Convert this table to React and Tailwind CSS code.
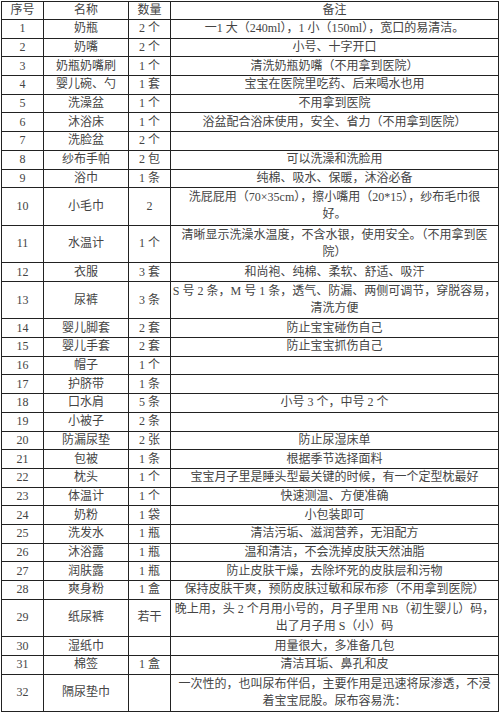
import React from 'react';

// 婴儿用品清单
const rows = [
  ['1', '奶瓶', '2 个', ['一1 大（240ml），1 小（150ml），宽口的易清洁。']],
  ['2', '奶嘴', '2 个', ['小号、十字开口']],
  ['3', '奶瓶奶嘴刷', '1 个', ['清洗奶瓶奶嘴（不用拿到医院）']],
  ['4', '婴儿碗、勺', '1 套', ['宝宝在医院里吃药、后来喝水也用']],
  ['5', '洗澡盆', '1 个', ['不用拿到医院']],
  ['6', '沐浴床', '1 个', ['浴盆配合浴床使用，安全、省力（不用拿到医院）']],
  ['7', '洗脸盆', '2 个', []],
  ['8', '纱布手帕', '2 包', ['可以洗澡和洗脸用']],
  ['9', '浴巾', '1 条', ['纯棉、吸水、保暖，沐浴必备']],
  ['10', '小毛巾', '2', ['洗屁屁用（70×35cm），擦小嘴用（20*15），纱布毛巾很', '好。']],
  ['11', '水温计', '1 个', ['清晰显示洗澡水温度，不含水银，使用安全。（不用拿到医', '院）']],
  ['12', '衣服', '3 套', ['和尚袍、纯棉、柔软、舒适、吸汗']],
  ['13', '尿裤', '3 条', ['S 号 2 条，M 号 1 条，透气、防漏、两侧可调节，穿脱容易，', '清洗方便']],
  ['14', '婴儿脚套', '2 套', ['防止宝宝碰伤自己']],
  ['15', '婴儿手套', '2 套', ['防止宝宝抓伤自己']],
  ['16', '帽子', '1 个', []],
  ['17', '护脐带', '1 条', []],
  ['18', '口水肩', '5 条', ['小号 3 个，中号 2 个']],
  ['19', '小被子', '2 条', []],
  ['20', '防漏尿垫', '2 张', ['防止尿湿床单']],
  ['21', '包被', '1 条', ['根据季节选择面料']],
  ['22', '枕头', '1 个', ['宝宝月子里是睡头型最关键的时候，有一个定型枕最好']],
  ['23', '体温计', '1 个', ['快速测温、方便准确']],
  ['24', '奶粉', '1 袋', ['小包装即可']],
  ['25', '洗发水', '1 瓶', ['清洁污垢、滋润营养，无泪配方']],
  ['26', '沐浴露', '1 瓶', ['温和清洁，不会洗掉皮肤天然油脂']],
  ['27', '润肤露', '1 瓶', ['防止皮肤干燥，去除坏死的皮肤层和污物']],
  ['28', '爽身粉', '1 盒', ['保持皮肤干爽，预防皮肤过敏和尿布疹（不用拿到医院）']],
  ['29', '纸尿裤', '若干', ['晚上用，头 2 个月用小号的，月子里用 NB（初生婴儿）码，', '出了月子用 S（小）码']],
  ['30', '湿纸巾', '', ['用量很大，多准备几包']],
  ['31', '棉签', '1 盒', ['清洁耳垢、鼻孔和皮']],
  ['32', '隔尿垫巾', '', ['一次性的，也叫尿布伴侣，主要作用是迅速将尿渗透，不浸', '着宝宝屁股。尿布容易洗：']],
];

const cell = 'border border-[#222] p-0 text-center align-middle';

export default function App() {
  return (
    <div className="w-[500px] h-[714px] bg-white overflow-hidden pt-[1px] pl-[1px]">
      <table
        className="table-fixed border-collapse w-[497px] text-[12px] leading-[17px] text-[#444]"
        style={{ fontFamily: '"Liberation Serif", "Noto Sans CJK SC", serif' }}
      >
        <colgroup>
          <col className="w-[42px]" />
          <col className="w-[85px]" />
          <col className="w-[42px]" />
          <col className="w-[328px]" />
        </colgroup>
        <thead>
          <tr className="h-[18px]">
            <th className={`${cell} font-normal`}>序号</th>
            <th className={`${cell} font-normal`}>名称</th>
            <th className={`${cell} font-normal`}>数量</th>
            <th className={`${cell} font-normal`}>备注</th>
          </tr>
        </thead>
        <tbody>
          {rows.map(([no, name, qty, note]) => (
            <tr key={no} className={note.length > 1 ? 'h-[37.5px]' : 'h-[18.7px]'}>
              <td className={cell}>{no}</td>
              <td className={cell}>{name}</td>
              <td className={cell}>{qty}</td>
              <td className={`${cell} whitespace-nowrap`}>
                {note.map((line, i) => (
                  <div key={i}>{line}</div>
                ))}
              </td>
            </tr>
          ))}
        </tbody>
      </table>
    </div>
  );
}
